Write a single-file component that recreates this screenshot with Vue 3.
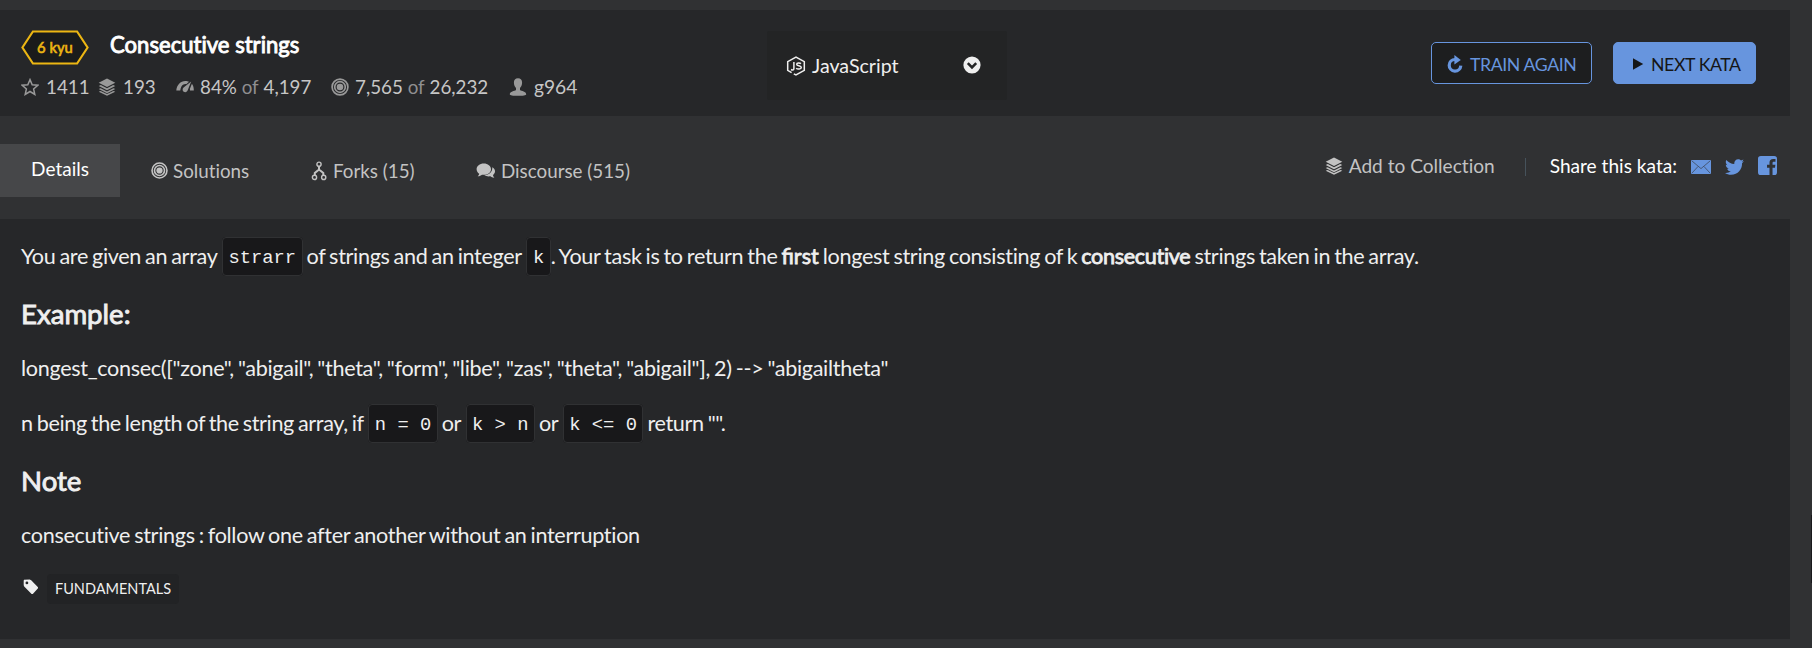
<script setup>
const tags = ['FUNDAMENTALS']
</script>

<template>
  <div class="page">
    <svg class="sprite" aria-hidden="true">
      <symbol id="layers" viewBox="0 0 18 18">
        <path d="M9 .5 17.3 4.7 9 9 .7 4.7Z" />
        <path d="M.7 8.1 2.8 7.1 9 10.3 15.2 7.1 17.3 8.1 9 12.3Z" />
        <path d="M.7 11.1 2.6 10.2 9 13.4 15.4 10.2 17.3 11.1 9 15.3Z" />
        <path d="M.7 13.7 2.6 12.9 9 16 15.4 12.9 17.3 13.7 9 17.8Z" />
      </symbol>
      <symbol id="target" viewBox="0 0 18 18">
        <g fill="none" stroke="currentColor" stroke-width="1.7">
          <circle cx="9" cy="9" r="7.9" />
          <circle cx="9" cy="9" r="5.300" />
        </g>
        <circle cx="9" cy="9" r="3.300" />
      </symbol>
    </svg>

    <header class="panel head">
      <div class="info">
        <div class="title-row">
          <div class="badge">
            <svg class="hex" viewBox="0 0 70 36"><path d="M12.3 1.500H57.700L68.500 18 57.700 34.500H12.300L1.500 18Z" /></svg>
            <span>6 kyu</span>
          </div>
          <h1>Consecutive strings</h1>
        </div>
        <div class="stats">
          <span class="stat s1">
            <svg viewBox="0 0 18 18"><path fill="none" stroke="currentColor" stroke-width="1.5" d="M9 1.600 11.200 6.700 16.800 7.200 12.600 10.900 13.800 16.400 9 13.500 4.200 16.400 5.400 10.900 1.200 7.200 6.800 6.700Z" /></svg>1411</span>
          <span class="stat s2"><svg><use href="#layers" /></svg>193</span>
          <span class="stat s3">
            <svg viewBox="0 0 18 18"><path d="M.3 12.600C.6 7 4.600 2.900 9.300 2.900 10.900 2.900 12 3.200 13 3.700L10.200 6.200C7 5.600 4.700 8.600 4.300 12.600Z" /><path d="M15.200 3.600 11.700 12.300A2.600 2.600 0 1 1 7.600 9.500Z" /><path d="M15.900 5.700C17.200 7.500 17.900 9.900 17.800 12.600L14 12.600 13.900 10.800Z" /></svg>84%&nbsp;<i>of</i>&nbsp;4,197</span>
          <span class="stat s4"><svg><use href="#target" /></svg>7,565&nbsp;<i>of</i>&nbsp;26,232</span>
          <span class="stat s5">
            <svg viewBox="0 0 18 18"><path d="M9 .3C6.300.3 4.800 2 4.900 4.700 5 7.200 6 8.900 7 9.900V12C5.500 13.200.8 13.300.8 16.200.8 17.600 4 17.700 9 17.700S17.200 17.600 17.200 16.200C17.200 13.300 12.500 13.200 11 12V9.900C12 8.900 13 7.200 13.100 4.700 13.200 2 11.700.3 9 .3Z" /></svg>g964</span>
        </div>
      </div>

      <div class="lang">
        <svg class="js" viewBox="0 0 20 20">
          <g fill="none" stroke="currentColor">
            <path stroke-width="1.500" d="M5.600 16.600 1.700 14.300V5.700L10 1 18.300 5.700V14.300L10 19 7.800 17.800" />
            <path stroke-width="1.500" d="M7.900 6V12.600C7.900 14.200 6.300 14.300 5 13.500M15 7.600C14 6.700 10.700 6.500 10.700 8.300 10.700 10.400 15.300 9.200 15.300 11.500 15.300 13.400 11.400 13.400 10.200 12.200" />
          </g>
        </svg>
        <span>JavaScript</span>
        <svg class="chev" viewBox="0 0 18 18"><circle cx="9" cy="9" r="8.600" /><path d="M4.800 7.100 9 11.300 13.200 7.100" /></svg>
      </div>

      <div class="actions">
        <button class="btn outline">
          <svg viewBox="0 0 18 18"><path fill="none" stroke="currentColor" stroke-width="3.200" d="M9 4.500A5.800 5.800 0 1 0 14.800 10.700" /><path d="M8.400 0 14.800 5 8.400 9.600Z" /></svg>TRAIN AGAIN</button>
        <button class="btn solid">
          <svg viewBox="0 0 18 18"><path d="M4 3.300 14.200 9 4 14.700Z" /></svg>NEXT KATA</button>
      </div>
    </header>

    <nav class="tabs">
      <a class="tab active">Details</a>
      <a class="tab t2"><svg><use href="#target" /></svg>Solutions</a>
      <a class="tab t3">
        <svg viewBox="0 0 18 20"><g fill="none" stroke="currentColor"><circle cx="8" cy="3.200" r="2.100" stroke-width="1.400" /><circle cx="3.500" cy="16.400" r="2.100" stroke-width="1.400" /><circle cx="12.700" cy="16.400" r="2.100" stroke-width="1.400" /><path stroke-width="2" d="M8 5.500V8.500L3.800 12V14.500M8 8.500 12.300 12V14.500" /></g></svg>Forks (15)</a>
      <a class="tab t4">
        <svg viewBox="0 0 20 18"><path d="M7.800 1.500C3.700 1.500.6 4 .6 7.200.6 9.100 1.700 10.700 3.200 11.700 3.100 12.700 2.300 13.600 1.700 14.200 3.400 14.300 5 13.500 6 12.700 11 13.500 15 10.800 15 7.200 15 4 11.800 1.500 7.800 1.500Z" /><path d="M16.200 5.200C18 6.100 19 7.500 19 9.300 19 10.900 18.200 12.100 17 13 17.100 14.200 17.700 15 18.400 15.700 16.800 15.800 15.300 15.100 14.400 14.300 12 14.700 9.800 14.200 8.300 13.100 13.300 12.800 16.900 9.500 16.200 5.200Z" /></svg>Discourse (515)</a>
      <div class="share">
        <a class="add"><svg><use href="#layers" /></svg>Add to Collection</a>
        <span class="sep"></span>
        <span class="label">Share this kata:</span>
        <svg class="mail" viewBox="0 0 20 14"><rect width="20" height="14" rx="1" /><path d="M1 1 10 8.600 19 1M1 13 7 6.500M19 13 13 6.500" /></svg>
        <svg class="twit" viewBox="0 48 512 416"><path d="M459.370 151.716c.325 4.548.325 9.097.325 13.645 0 138.720-105.583 298.558-298.558 298.558-59.452 0-114.680-17.219-161.137-47.106 8.447.974 16.568 1.299 25.340 1.299 49.055 0 94.213-16.568 130.274-44.832-46.132-.975-84.792-31.188-98.112-72.772 6.498.974 12.995 1.624 19.818 1.624 9.421 0 18.843-1.300 27.614-3.573-48.081-9.747-84.143-51.980-84.143-102.985v-1.299c13.969 7.797 30.214 12.670 47.431 13.319-28.264-18.843-46.781-51.005-46.781-87.391 0-19.492 5.197-37.360 14.294-52.954 51.655 63.675 129.300 105.258 216.365 109.807-1.624-7.797-2.599-15.918-2.599-24.040 0-57.828 46.782-104.934 104.934-104.934 30.213 0 57.502 12.670 76.670 33.137 23.715-4.548 46.456-13.320 66.599-25.340-7.798 24.366-24.366 44.833-46.132 57.827 21.117-2.273 41.584-8.122 60.426-16.243-14.292 20.791-32.161 39.308-52.628 54.253z" /></svg>
        <svg class="fb" viewBox="0 0 20 20"><path d="M3 0H17A3 3 0 0 1 20 3V17A3 3 0 0 1 17 20H15.300V12.300H17.900L18.300 9.300H15.300V7.500C15.300 6.500 15.700 6 16.900 6H18.400V3.200H16C13.500 3.200 12.100 4.600 12.100 7.100V9.300H9.500V12.300H12.100V20H3A3 3 0 0 1 0 17V3A3 3 0 0 1 3 0Z" /></svg>
      </div>
    </nav>

    <main class="panel body">
      <p class="p1">You are given an array <code>strarr</code> of strings and an integer <code>k</code>. Your task is to return the <b class="lig">first</b> longest string consisting of k <b>consecutive</b> strings taken in the array.</p>
      <h3>Example:</h3>
      <p class="p2">longest_consec(["zone", "abigail", "theta", "form", "libe", "zas", "theta", "abigail"], 2) --&gt; "abigailtheta"</p>
      <p class="p3">n being the length of the string array, if <code>n = 0</code> or <code>k &gt; n</code> or <code>k &lt;= 0</code> return "".</p>
      <h3>Note</h3>
      <p class="p4">consecutive strings : follow one after another without an interruption</p>
      <div class="tags">
        <svg viewBox="0 0 16 16"><path fill-rule="evenodd" d="M.7 1.700 1 .7 6.700.6 8.200 1.300 15 8.200V9.300L9.800 15.100H8.600L1.200 7.600.7 6.200ZM3.900 2.500A1.400 1.400 0 1 0 3.900 5.300 1.400 1.400 0 0 0 3.900 2.500Z" /></svg>
        <span v-for="t in tags" :key="t" class="tag">{{ t }}</span>
      </div>
    </main>
    <div class="thumb"></div>
  </div>
</template>

<style>
body { margin: 0; background: #303133; }
</style>

<style scoped>
.page {
  position: relative;
  box-sizing: border-box;
  width: 1812px;
  height: 648px;
  padding-top: 10px;
  overflow: hidden;
  background: #303133;
  color: #efefef;
  font-family: Lato, "Liberation Sans", sans-serif;
  font-variant-ligatures: none;
}
.sprite { position: absolute; width: 0; height: 0; }
svg { fill: currentColor; flex: none; }
.panel { width: 1790px; box-sizing: border-box; background: #262729; }
.head { display: flex; height: 106px; }
.info { width: 767px; box-sizing: border-box; padding: 20px 0 0 20px; }
.title-row { display: flex; align-items: center; height: 35px; }
.badge {
  position: relative;
  width: 70px;
  height: 35px;
  line-height: 35px;
  text-align: center;
  font-size: 14.8px;
  color: #ecb613;
  -webkit-text-stroke: 0.6px #ecb613;
}
.hex { position: absolute; inset: 0; width: 70px; height: 35px; fill: #1a1b1b; stroke: #ecb613; stroke-width: 2.200; }
.badge span { position: relative; }
h1 {
  margin: -5px 0 0 20px;
  font-size: 22.1px;
  line-height: 30px;
  font-weight: 400;
  color: #fff;
  -webkit-text-stroke: 0.9px #fff;
}
.stats { display: flex; margin: 9px 0 0 1px; height: 26px; line-height: 26px; font-size: 18.8px; color: #c6c6c6; }
.stat { display: flex; align-items: center; white-space: nowrap; }
.stat svg { width: 18px; height: 18px; color: #999; }
.stat i { font-style: normal; color: #8f8f90; }
.s1 { width: 77px; } .s1 svg { margin-right: 7px; }
.s2 { width: 78px; } .s2 svg { margin-right: 7px; }
.s3 { width: 155px; } .s3 svg { margin-right: 6px; }
.s4 { width: 178px; } .s4 svg { margin-right: 6px; }
.s5 { font-size: 19.2px; }
.s5 svg { margin-right: 7px; }

.lang {
  display: flex;
  align-items: center;
  box-sizing: border-box;
  width: 240px;
  height: 69px;
  margin-top: 21px;
  padding: 0 26px 0 19px;
  border-radius: 2px;
  background: #232425;
  font-size: 19.6px;
}
.js { width: 20px; height: 20px; margin-right: 6px; }
.lang span { flex: 1; }
.chev { width: 18px; height: 18px; margin-top: -2px; }
.chev path { fill: none; stroke: #232425; stroke-width: 2.600; }

.actions { display: flex; gap: 21px; margin: 32px 0 0 424px; }
.btn {
  display: flex;
  align-items: center;
  box-sizing: border-box;
  height: 42px;
  padding: 3px 0 0;
  border: 1px solid #6795de;
  border-radius: 5px;
  font: 400 17.7px/39px Lato, "Liberation Sans", sans-serif;
  letter-spacing: -0.4px;
  white-space: nowrap;
}
.outline { width: 161px; padding-left: 14px; background: #1d1e1f; color: #6795de; }
.outline svg { width: 18px; height: 18px; margin: -2px 6px 0 0; }
.solid { width: 143px; padding-left: 15px; background: #6795de; color: #151617; }
.solid svg { width: 18px; height: 18px; margin: -1px 4px 0 0; }

.tabs { display: flex; width: 1790px; height: 75px; padding-top: 28px; font-size: 18.8px; color: #c3c3c3; }
.tab { display: flex; align-items: center; height: 53px; white-space: nowrap; }
.tab svg { width: 18px; height: 18px; }
.active { box-sizing: border-box; width: 120px; height: 53px; justify-content: center; padding-bottom: 4px; background: #464749; color: #fff; font-size: 19px; }
.t2 { width: 160px; margin-left: 31px; } .t2 svg { width: 17px; height: 17px; margin-right: 5px; }
.t3 { width: 165px; } .t3 svg { height: 20px; width: 18px; margin-right: 4px; }
.t4 svg { width: 20px; margin-right: 5px; }
.share { display: flex; align-items: center; height: 43px; margin-left: auto; padding-right: 13px; font-size: 19.1px; white-space: nowrap; }
.add { display: flex; align-items: center; }
.add svg { width: 18px; height: 18px; margin-right: 6px; }
.sep { width: 1px; height: 18px; margin: 3px 23.5px 0 30.5px; background: #46525b; }
.label { color: #fff; }
.mail, .twit, .fb { color: #6795de; }
.mail { width: 20px; height: 14px; margin: 2px 0 0 14px; }
.mail path { fill: none; stroke: #303133; stroke-width: 0.8; opacity: 0.75; }
.twit { width: 19px; height: 16px; margin: 2px 0 0 14px; }
.fb { width: 19px; height: 19px; margin: -1px 0 0 14px; }

.body { height: 420px; padding: 17px 21px 0; }
p { margin: 0; height: 40px; line-height: 40px; font-size: 21.6px; word-spacing: -1.2px; white-space: nowrap; }
.p1 { letter-spacing: -0.325px; }
.p2 { letter-spacing: -0.32px; }
.p3 { letter-spacing: -0.36px; margin-top: 15px; }
.p4 { letter-spacing: -0.32px; }
b { font-weight: 400; -webkit-text-stroke: 0.8px currentColor; }
.lig { font-variant-ligatures: common-ligatures; letter-spacing: 0; }
h3 { margin: 20px 0 16px; height: 36px; line-height: 36px; font-size: 27.6px; font-weight: 400; -webkit-text-stroke: 0.9px currentColor; }
code {
  margin-left: 1px;
  padding: 9px 5.5px 6px;
  border: 1px solid #303133;
  border-radius: 4px;
  background: #18181a;
  vertical-align: 1px;
  font: 18.8px/20px "Liberation Mono", monospace;
  letter-spacing: 0;
  word-spacing: 0;
}
.tags { display: flex; align-items: flex-start; margin-top: 19px; }
.tags svg { width: 16px; height: 16px; margin: 5px 8px 0 2px; }
.tag { height: 30px; line-height: 30px; padding: 0 8px; border-radius: 4px; background: #222325; font-size: 14.5px; }
.thumb { position: absolute; right: 0; top: 515px; width: 1px; height: 68px; background: #19191c; }
</style>
